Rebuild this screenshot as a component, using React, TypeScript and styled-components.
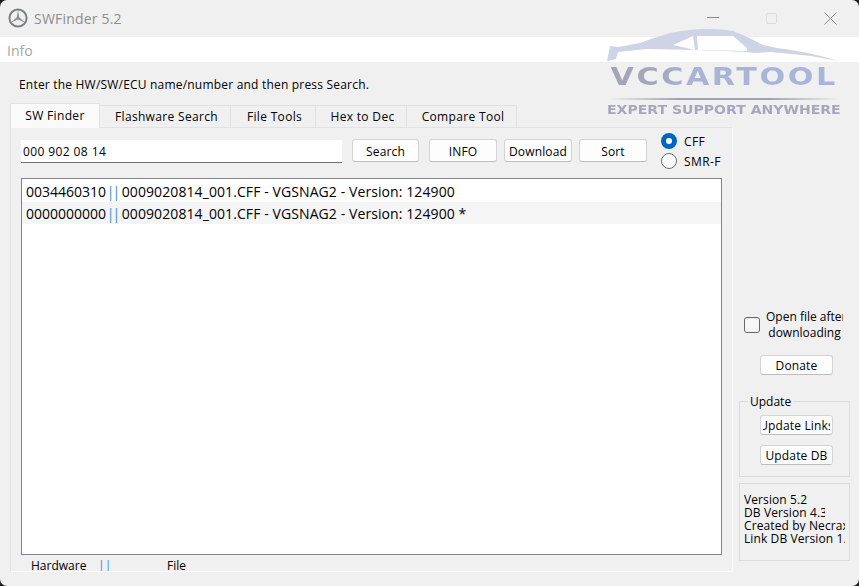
import styled, { createGlobalStyle } from "styled-components";

const FONT = `"Open Sans", "Noto Sans", "Liberation Sans", sans-serif`;

const Global = createGlobalStyle`
  html, body {
    margin: 0;
    height: 100%;
    background: #1c1c1c;
    overflow: hidden;
  }
  * { box-sizing: border-box; }
`;

const TABS = [
  { label: "SW Finder", width: 90 },
  { label: "Flashware Search", width: 131 },
  { label: "File Tools", width: 85 },
  { label: "Hex to Dec", width: 91 },
  { label: "Compare Tool", width: 110 },
];
const BUTTONS = [
  { label: "Search", width: 67, gap: 10 },
  { label: "INFO", width: 68, gap: 10 },
  { label: "Download", width: 68, gap: 7 },
  { label: "Sort", width: 68, gap: 7 },
];
const ROWS = [
  { hw: "0034460310", rest: "0009020814_001.CFF - VGSNAG2 - Version: 124900" },
  { hw: "0000000000", rest: "0009020814_001.CFF - VGSNAG2 - Version: 124900 *" },
];
const VERSIONS = ["Version 5.2", "DB Version 4.3", "Created by Necrax", "Link DB Version 1.2"];

function StarIcon() {
  return (
    <svg width="20" height="20" viewBox="0 0 20 20">
      <circle cx="10" cy="10" r="8.6" fill="none" stroke="#7b8084" strokeWidth="2" />
      <path d="M10 2 L11.2 9.2 L17 14.6 L10 11.6 L3 14.6 L8.8 9.2 Z" fill="#8a8f93" />
    </svg>
  );
}

function CarShape() {
  return (
    <svg width="236" height="36" viewBox="0 0 236 36">
      <path
        d="M1 33 L4 18 L12 19 L34 15 Q50 9 64 5 Q85 1 101 1 Q118 1 127 3 Q140 8 157 17 L171 20 Q205 24 232 33 L205 28 Q185 26 165 24 L150 25 L141 24 L90 22 L40 21 L12 24 L10 31 Z"
        fill="#cfd3e6"
      />
      <path d="M67 17 L87 8 L89 22 Z M91 8 L127 8 L141 20 L141 23 L92 22 Z" fill="#fff" />
    </svg>
  );
}

export default function App() {
  return (
    <>
      <Global />
      <Window>
        <TitleBar>
          <TitleLeft>
            <StarIcon />
            <TitleText>SWFinder 5.2</TitleText>
          </TitleLeft>
          <Captions>
            <Minimize />
            <Maximize />
            <svg width="13" height="13" viewBox="0 0 13 13">
              <path d="M0.5 0.5 L12.5 12.5 M12.5 0.5 L0.5 12.5" stroke="#8a8a8a" strokeWidth="1" />
            </svg>
          </Captions>
        </TitleBar>
        <MenuBar>Info</MenuBar>
        <Logo>
          <CarShape />
          <LogoName>VCCARTOOL</LogoName>
          <LogoRule />
          <LogoTag>EXPERT SUPPORT ANYWHERE</LogoTag>
        </Logo>
        <Body>
          <Main>
            <Hint>Enter the HW/SW/ECU name/number and then press Search.</Hint>
            <TabStrip>
              {TABS.map((t, i) => (
                <Tab key={t.label} $active={i === 0} $width={t.width}>
                  {t.label}
                </Tab>
              ))}
            </TabStrip>
            <Panel>
              <Controls>
                <SearchInput>000 902 08 14</SearchInput>
                {BUTTONS.map((b) => (
                  <PushButton key={b.label} $width={b.width} $left={b.gap}>
                    <ButtonText>{b.label}</ButtonText>
                  </PushButton>
                ))}
                <Radios>
                  <RadioRow>
                    <RadioDot $on />
                    CFF
                  </RadioRow>
                  <RadioRow>
                    <RadioDot />
                    SMR-F
                  </RadioRow>
                </Radios>
              </Controls>
              <ResultList>
                {ROWS.map((r, i) => (
                  <ResultRow key={r.hw} $alt={i % 2 === 1}>
                    {r.hw} <Pipes>||</Pipes> <RowRest>{r.rest}</RowRest>
                  </ResultRow>
                ))}
              </ResultList>
              <Legend>
                <LegendHw>Hardware</LegendHw>
                <LegendPipes>| |</LegendPipes>
                <span>File</span>
              </Legend>
            </Panel>
          </Main>
          <Side>
            <CheckRow>
              <CheckBox />
              <CheckLabel>
                <div>Open file after</div>
                <div>downloading</div>
              </CheckLabel>
            </CheckRow>
            <SideButtonRow $top={14}>
              <PushButton $width={73} $height={20} $left={0}>
                <ButtonText>Donate</ButtonText>
              </PushButton>
            </SideButtonRow>
            <UpdateGroup>
              <GroupTitle>Update</GroupTitle>
              <PushButton $width={73} $height={20} $left={0}>
                <ButtonText>Update Links</ButtonText>
              </PushButton>
              <PushButton $width={73} $height={20} $left={0}>
                <ButtonText>Update DB</ButtonText>
              </PushButton>
            </UpdateGroup>
            <VersionBox>
              {VERSIONS.map((v, i) => (
                <VersionLine key={v} $short={i === 1}>
                  {v}
                </VersionLine>
              ))}
            </VersionBox>
          </Side>
        </Body>
      </Window>
    </>
  );
}

const Window = styled.div`
  position: relative;
  width: 859px;
  height: 586px;
  background: #f0f0f0;
  border-radius: 7px;
  overflow: hidden;
  display: flex;
  flex-direction: column;
  font-family: ${FONT};
  font-size: 12px;
  color: #000;
`;

const TitleBar = styled.div`
  height: 37px;
  flex: none;
  display: flex;
  align-items: center;
  justify-content: space-between;
  padding: 0 22px 1px 8px;
`;

const TitleLeft = styled.div`
  display: flex;
  align-items: center;
  gap: 6px;
`;

const TitleText = styled.span`
  font-size: 14px;
  letter-spacing: 0.2px;
  color: #8d8d8d;
`;

const Captions = styled.div`
  display: flex;
  align-items: center;
  gap: 47px;
`;

const Minimize = styled.div`
  width: 12px;
  height: 1px;
  margin-bottom: 2px;
  background: #8a8a8a;
`;

const Maximize = styled.div`
  width: 11px;
  height: 11px;
  border: 1px solid #dcdcdc;
  border-radius: 2px;
`;

const MenuBar = styled.div`
  height: 25px;
  flex: none;
  background: #fff;
  padding-left: 7px;
  font-size: 14px;
  line-height: 27px;
  color: #aaa59f;
`;

const Logo = styled.div`
  position: absolute;
  left: 606px;
  top: 28px;
  width: 236px;
  display: flex;
  flex-direction: column;
  align-items: center;
`;

const LogoName = styled.div`
  font-family: "DejaVu Sans", sans-serif;
  font-weight: 700;
  font-size: 24px;
  line-height: 24px;
  letter-spacing: 2px;
  margin-top: 1px;
  white-space: nowrap;
  transform: scaleX(1.26);
  background: linear-gradient(90deg, #a4a5b4 0%, #a5a8bb 22%, #a9b3d6 32%, #a9b5da 100%);
  -webkit-background-clip: text;
  background-clip: text;
  color: transparent;
`;

const LogoRule = styled.div`
  width: 232px;
  height: 2px;
  margin-top: 9px;
  background: linear-gradient(90deg, #f0f0f0, #a2a3b6 30%, #a2a3b6 70%, #f0f0f0);
`;

const LogoTag = styled.div`
  font-family: "DejaVu Sans", sans-serif;
  font-weight: 700;
  font-size: 12px;
  line-height: 14px;
  margin-top: 3px;
  white-space: nowrap;
  transform: scaleX(1.17);
  color: #a6a7bb;
`;

const Body = styled.div`
  flex: 1;
  min-height: 0;
  display: flex;
  padding: 0 9px 14px 10px;
  gap: 6px;
`;

const Main = styled.div`
  width: 723px;
  display: flex;
  flex-direction: column;
`;

const Hint = styled.div`
  height: 43px;
  padding: 14px 0 0 9px;
  line-height: 17px;
  letter-spacing: 0.2px;
`;

const TabStrip = styled.div`
  display: flex;
  height: 22px;
  flex: none;
`;

const Tab = styled.div<{ $active?: boolean; $width: number }>`
  width: ${({ $width }) => $width}px;
  height: ${({ $active }) => ($active ? "25px" : "22px")};
  margin-top: ${({ $active }) => ($active ? "-2px" : "0")};
  padding: ${({ $active }) => ($active ? "3px 0 0 0" : "2px 0 0 3px")};
  line-height: 17px;
  text-align: center;
  letter-spacing: 0.33px;
  white-space: nowrap;
  border: 1px solid #e2e2e2;
  border-bottom: none;
  border-left-width: ${({ $active }) => ($active ? "1px" : "0")};
  background: ${({ $active }) => ($active ? "#fafafa" : "#f0f0f0")};
  position: relative;
  z-index: ${({ $active }) => ($active ? 1 : 0)};
`;

const Panel = styled.div`
  flex: 1;
  min-height: 0;
  overflow: hidden;
  border: 1px solid #e2e2e2;
  border-bottom-color: #fafafa;
  border-right-color: #fafafa;
  padding: 11px 10px 0 10px;
  display: flex;
  flex-direction: column;
`;

const Controls = styled.div`
  display: flex;
  height: 39px;
  flex: none;
  align-items: flex-start;
`;

const SearchInput = styled.div`
  width: 321px;
  height: 23px;
  margin-top: 1px;
  background: #fff;
  border-bottom: 1px solid #6f6f6f;
  padding-left: 2px;
  line-height: 23px;
  letter-spacing: 0.4px;
`;

const PushButton = styled.div<{ $width: number; $height?: number; $left: number }>`
  width: ${({ $width }) => $width}px;
  height: ${({ $height }) => $height ?? 23}px;
  margin-left: ${({ $left }) => $left}px;
  flex: none;
  background: #fdfdfd;
  border: 1px solid #d4d4d4;
  border-bottom-color: #bcbcbc;
  border-radius: 3px;
  display: flex;
  align-items: center;
  justify-content: center;
`;

const ButtonText = styled.span`
  width: calc(100% - 4px);
  display: flex;
  justify-content: center;
  padding-top: 1px;
  letter-spacing: 0.15px;
  white-space: nowrap;
  overflow: hidden;
`;

const Radios = styled.div`
  margin: -6px 0 0 14px;
  display: flex;
  flex-direction: column;
  gap: 4px;
`;

const RadioRow = styled.div`
  display: flex;
  align-items: center;
  gap: 7px;
  height: 16px;
  letter-spacing: 0.4px;
  white-space: nowrap;
`;

const RadioDot = styled.span<{ $on?: boolean }>`
  width: 16px;
  height: 16px;
  border-radius: 50%;
  background: #fff;
  border: ${({ $on }) => ($on ? "5px solid #0067c0" : "1px solid #6e6e6e")};
`;

const ResultList = styled.div`
  height: 377px;
  flex: none;
  background: #fff;
  border: 1px solid #82868c;
  padding-top: 1px;
`;

const ResultRow = styled.div<{ $alt?: boolean }>`
  height: 22px;
  padding: 1px 0 0 4px;
  font-size: 14px;
  line-height: 22px;
  background: ${({ $alt }) => ($alt ? "#f5f5f5" : "#fff")};
`;

const Pipes = styled.span`
  color: #2f8fdc;
  letter-spacing: -2px;
  margin: 0 1px 0 -3px;
`;

const RowRest = styled.span`
  margin-left: -1px;
  letter-spacing: 0.09px;
`;

const Legend = styled.div`
  display: flex;
  padding: 2px 0 0 10px;
  line-height: 17px;
`;

const LegendHw = styled.span`
  width: 67px;
`;

const LegendPipes = styled.span`
  width: 69px;
  letter-spacing: -1.5px;
  color: #2f8fdc;
`;

const Side = styled.div`
  width: 111px;
  padding-top: 247px;
  display: flex;
  flex-direction: column;
`;

const CheckRow = styled.div`
  height: 32px;
  display: flex;
  align-items: center;
  padding-left: 5px;
`;

const CheckBox = styled.span`
  width: 16px;
  height: 16px;
  flex: none;
  background: #f7f7f7;
  border: 1px solid #666;
  border-radius: 3px;
`;

const CheckLabel = styled.div`
  width: 77px;
  flex: none;
  margin-left: 6px;
  text-align: center;
  white-space: nowrap;
  line-height: 16px;
  overflow: hidden;
`;

const SideButtonRow = styled.div<{ $top: number }>`
  margin-top: ${({ $top }) => $top}px;
  padding-left: 21px;
`;

const UpdateGroup = styled.div`
  position: relative;
  height: 76px;
  margin-top: 26px;
  border: 1px solid #dcdcdc;
  padding: 13px 0 0 20px;
  display: flex;
  flex-direction: column;
  gap: 10px;
`;

const GroupTitle = styled.span`
  position: absolute;
  top: -8px;
  left: 8px;
  padding: 0 2px;
  background: #f0f0f0;
  line-height: 16px;
`;

const VersionBox = styled.div`
  height: 78px;
  margin-top: 6px;
  border: 1px solid #dcdcdc;
  padding: 9px 4px 0 4px;
  overflow: hidden;
`;

const VersionLine = styled.div<{ $short?: boolean }>`
  height: 13px;
  line-height: 13px;
  letter-spacing: 0.1px;
  white-space: nowrap;
  overflow: hidden;
  width: ${({ $short }) => ($short ? "81px" : "100%")};
`;
